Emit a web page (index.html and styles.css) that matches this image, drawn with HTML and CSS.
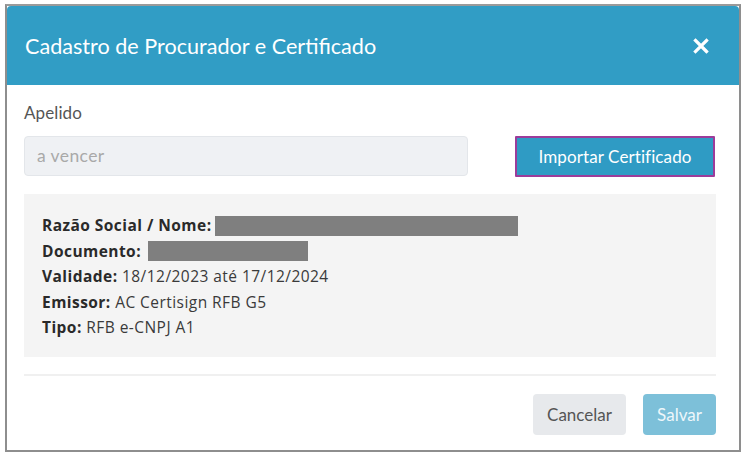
FILE: index.html
```html
<!DOCTYPE html>
<html lang="pt-BR">
<head>
<meta charset="utf-8">
<title>Cadastro de Procurador e Certificado</title>
<link rel="stylesheet" href="styles.css">
</head>
<body>
<div class="frame">
  <div class="modal">
    <div class="modal-header">
      <h1 class="modal-title">Cadastro de Procurador e Certificado</h1>
      <button class="close" type="button" aria-label="Fechar">
        <svg width="16" height="16" viewBox="0 0 16 16"><path d="M2.5 2.5 L13.5 13.5 M13.5 2.5 L2.5 13.5" stroke="#fff" stroke-width="3.2" stroke-linecap="square"/></svg>
      </button>
    </div>
    <div class="modal-body">
      <label class="label" for="apelido">Apelido</label>
      <div class="row">
        <input id="apelido" class="input" type="text" placeholder="a vencer">
        <button class="btn btn-import" type="button">Importar Certificado</button>
      </div>
      <div class="info">
        <div class="line"><b>Razão Social / Nome:</b><span class="redact redact-1"></span></div>
        <div class="line"><b>Documento:</b><span class="redact redact-2"></span></div>
        <div class="line"><b>Validade:</b>&nbsp;18/12/2023 até 17/12/2024</div>
        <div class="line"><b>Emissor:</b>&nbsp;AC Certisign RFB G5</div>
        <div class="line"><b>Tipo:</b>&nbsp;RFB e-CNPJ A1</div>
      </div>
    </div>
    <div class="modal-footer">
      <button class="btn btn-cancel" type="button">Cancelar</button>
      <button class="btn btn-save" type="button">Salvar</button>
    </div>
  </div>
</div>
</body>
</html>
```
FILE: styles.css
```css
* { box-sizing: border-box; }
html, body { margin: 0; padding: 0; background: #ffffff; }
body { padding: 4px 3px 2px 5px; font-family: "Open Sans", "Noto Sans", sans-serif; }

.frame {
  border: 2px solid #8e8e8e;
  border-top-color: #9a9a9a;
  height: 448px;
  background: #fff;
}

.modal {
  height: 100%;
  display: flex;
  flex-direction: column;
  background: #fff;
}

.modal-header {
  height: 79px;
  background: #319dc5;
  border-radius: 4px 4px 0 0;
  display: flex;
  align-items: center;
  justify-content: space-between;
  padding: 0 30px 0 18px;
}
.modal-title {
  margin: 0;
  font-family: "Lato", sans-serif;
  font-weight: 400;
  font-size: 21.6px;
  color: #fff;
  letter-spacing: 0;
}
.close {
  border: 0;
  background: transparent;
  padding: 0;
  width: 16px;
  height: 16px;
  display: flex;
}

.modal-body {
  padding: 19px 23px 0 17px;
}
.label {
  display: block;
  font-family: "Lato", sans-serif;
  font-size: 17px;
  letter-spacing: 0.1px;
  color: #555;
  margin-bottom: 12px;
  line-height: 18px;
}
.row {
  display: flex;
  align-items: center;
  justify-content: space-between;
}
.input {
  width: 444px;
  height: 40px;
  background: #eff1f4;
  border: 1px solid #e3e6ea;
  border-radius: 4px;
  padding: 0 12px;
  font-family: "Lato", sans-serif;
  font-size: 17.5px;
  letter-spacing: 0.4px;
  color: #555;
}
.input::placeholder { color: #a9a9a9; }

.btn {
  font-family: "Lato", sans-serif;
  font-size: 17px;
  border-radius: 4px;
  cursor: pointer;
}
.btn-import {
  width: 200px;
  height: 41px;
  margin-top: 2px;
  margin-right: 1px;
  background: #2f9bc4;
  color: #fff;
  border: 2px solid #9c3c9a;
  border-radius: 1px;
  letter-spacing: 0.1px;
}

.info {
  margin-top: 17px;
  background: #f4f4f4;
  height: 163px;
  padding: 19px 18px 15px;
  font-family: "Open Sans", sans-serif;
  font-size: 15.5px;
  letter-spacing: 0.45px;
  color: #3a3a3a;
}
.line {
  height: 25.5px;
  line-height: 25.5px;
  display: flex;
  align-items: center;
  white-space: pre;
}
.line b { font-weight: 700; color: #2a2a2a; }
.redact {
  display: inline-block;
  background: #7f7f7f;
  height: 20px;
}
.redact-1 { width: 303px; margin-left: 3px; }
.redact-2 { width: 160px; margin-left: 7px; }

.modal-footer {
  margin: 17px 23px 0 17px;
  border-top: 2px solid #f0f0f0;
  padding-top: 18px;
  display: flex;
  justify-content: flex-end;
  gap: 17px;
}
.btn-cancel {
  width: 93px;
  height: 41px;
  background: #e7e9ec;
  color: #555;
  border: 0;
}
.btn-save {
  width: 73px;
  height: 41px;
  background: #7dc0d9;
  color: #eef7fb;
  border: 0;
}
```
